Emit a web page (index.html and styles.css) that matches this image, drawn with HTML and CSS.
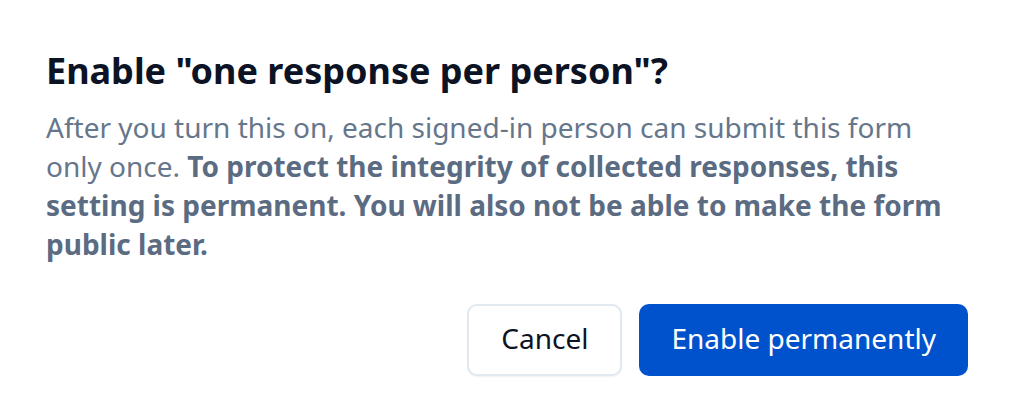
FILE: index.html
```html
<!DOCTYPE html>
<html>
<head>
<meta charset="utf-8">
<link rel="stylesheet" href="styles.css">
</head>
<body>
<div class="dialog">
  <h1 class="title">Enable "one response per person"?</h1>
  <p class="desc">After you turn this on, each signed-in person can submit this form only once. <strong>To protect the integrity of collected responses, this setting is permanent. You will also not be able to make the form public later.</strong></p>
  <div class="actions">
    <button class="btn btn-secondary">Cancel</button>
    <button class="btn btn-primary">Enable permanently</button>
  </div>
</div>
</body>
</html>
```
FILE: styles.css
```css
html, body {
  margin: 0;
  padding: 0;
  background: #ffffff;
}
body {
  font-family: "Noto Sans", "Open Sans", sans-serif;
  width: 1012px;
  height: 420px;
}
.dialog {
  padding: 47px 44px 0 46px;
}
.title {
  margin: 0;
  font-size: 36px;
  line-height: 48px;
  font-weight: 700;
  color: #0b1324;
}
.desc {
  margin: 13px 0 0;
  font-size: 28px;
  line-height: 39px;
  color: #66768b;
}
.desc strong {
  font-weight: 700;
  color: #5b6b82;
}
.actions {
  display: flex;
  justify-content: flex-end;
  gap: 17px;
  margin-top: 40px;
}
.btn {
  font-family: inherit;
  font-size: 28px;
  height: 72px;
  border-radius: 10px;
  padding: 0 32px 5px;
  cursor: pointer;
}
.btn-secondary {
  background: #ffffff;
  border: 2px solid #e2e8f0;
  color: #0b1324;
  box-shadow: 0 1px 2px rgba(15, 23, 42, 0.06);
}
.btn-primary {
  background: #0052cc;
  border: none;
  color: #ffffff;
}
```
